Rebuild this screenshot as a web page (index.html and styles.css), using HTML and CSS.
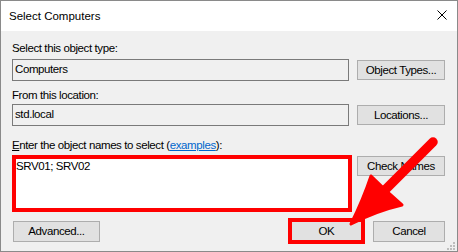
FILE: index.html
```html
<!DOCTYPE html>
<html>
<head>
<meta charset="utf-8">
<link rel="stylesheet" href="styles.css">
</head>
<body>
<div class="dialog">
  <div class="titlebar">
    <span class="title">Select Computers</span>
    <svg class="close" width="10" height="10" viewBox="0 0 10 10"><path d="M0.5 0.5 L9.5 9.5 M9.5 0.5 L0.5 9.5" stroke="#000" stroke-width="1" fill="none"/></svg>
  </div>
  <div class="content">
    <div class="label l1">Select this object type:</div>
    <div class="row r1">
      <div class="textbox">Computers</div>
      <button class="btn">Object Types...</button>
    </div>
    <div class="label l2">From this location:</div>
    <div class="row r2">
      <div class="textbox">std.local</div>
      <button class="btn">Locations...</button>
    </div>
    <div class="label l3"><span class="ak">E</span>nter the object names to select (<a class="link">examples</a>):</div>
    <div class="row names-row">
      <div class="names-box">SRV01; SRV02</div>
      <button class="btn check">Check Names</button>
    </div>
    <div class="footer">
      <button class="btn adv">Advanced...</button>
      <div class="ok-frame"><button class="btn ok">OK</button></div>
      <button class="btn cancel">Cancel</button>
    </div>
  </div>
  <svg class="arrow" width="458" height="252" viewBox="0 0 458 252">
    <path d="M433 142 L386 189" stroke="#ff0000" stroke-width="9.5" stroke-linecap="round" fill="none"/>
    <path d="M351 224 Q363 200 371 176 Q386 191 402 205 Q376 211 351 224 Z" fill="#ff0000" stroke="#ff0000" stroke-width="3" stroke-linejoin="round"/>
  </svg>
  <svg class="grip" width="8" height="8" viewBox="0 0 8 8">
    <rect x="6" y="0" width="2" height="2" fill="#bdbdbd"/>
    <rect x="3" y="3" width="2" height="2" fill="#bdbdbd"/>
    <rect x="6" y="3" width="2" height="2" fill="#bdbdbd"/>
    <rect x="0" y="6" width="2" height="2" fill="#bdbdbd"/>
    <rect x="3" y="6" width="2" height="2" fill="#bdbdbd"/>
    <rect x="6" y="6" width="2" height="2" fill="#bdbdbd"/>
  </svg>
</div>
</body>
</html>
```
FILE: styles.css
```css
* { box-sizing: border-box; }
body {
  margin: 0;
  font-family: "Liberation Sans", Arial, sans-serif;
  font-size: 11.5px;
  color: #000;
}
.dialog {
  position: relative;
  width: 458px;
  height: 252px;
  border: 1px solid #8a8a8a;
  background: #f0f0f0;
  display: flex;
  flex-direction: column;
  overflow: hidden;
}
.titlebar {
  height: 30px;
  background: #fff;
  display: flex;
  align-items: center;
  justify-content: space-between;
  padding: 0 10px 0 8px;
}
.title {
  font-size: 11.5px;
  line-height: 15px;
}
.close {
  align-self: flex-start;
  margin-top: 9px;
}
.content {
  display: flex;
  flex-direction: column;
  padding: 10px 12px 0 11px;
  letter-spacing: -0.4px;
}
.label {
  line-height: 15px;
  height: 15px;
  white-space: nowrap;
}
.l1 { margin-bottom: 3px; }
.l2 { margin-top: 7px; margin-bottom: 1px; }
.l3 { margin-top: 12px; margin-bottom: 2px; }
.ak { text-decoration: underline; }
.link { color: #0066cc; text-decoration: underline; }
.row {
  display: flex;
  align-items: center;
  justify-content: space-between;
}
.textbox {
  width: 337px;
  height: 22px;
  border: 1px solid #7a7a7a;
  padding: 2px 2px 0 2px;
  line-height: 15px;
}
.btn {
  font-family: inherit;
  font-size: 11.5px;
  letter-spacing: -0.4px;
  color: #000;
  background: #e1e1e1;
  border: 1px solid #adadad;
  width: 88px;
  height: 20px;
  padding: 0;
  margin: 0;
  line-height: 17px;
  text-align: center;
}
.names-row { align-items: flex-start; }
.names-box {
  width: 340px;
  height: 57px;
  border: 4px solid #ff0000;
  background: #fff;
  padding: 0;
  line-height: 14px;
}
.check { margin-top: 1px; }
.footer {
  margin-top: 6px;
  height: 26px;
  display: flex;
  align-items: center;
}
.adv {
  margin-left: 1px;
  width: 87px;
  height: 21px;
}
.ok-frame {
  margin-left: auto;
  width: 77px;
  height: 26px;
  border: 4px solid #ff0000;
  display: flex;
}
.ok {
  width: 100%;
  height: 100%;
  border: none;
  line-height: 18px;
}
.cancel {
  margin-left: 8px;
  width: 72px;
  height: 21px;
}
.arrow {
  position: absolute;
  top: -1px;
  left: -1px;
  pointer-events: none;
}
.grip {
  position: absolute;
  right: 2px;
  bottom: 1px;
}
```
